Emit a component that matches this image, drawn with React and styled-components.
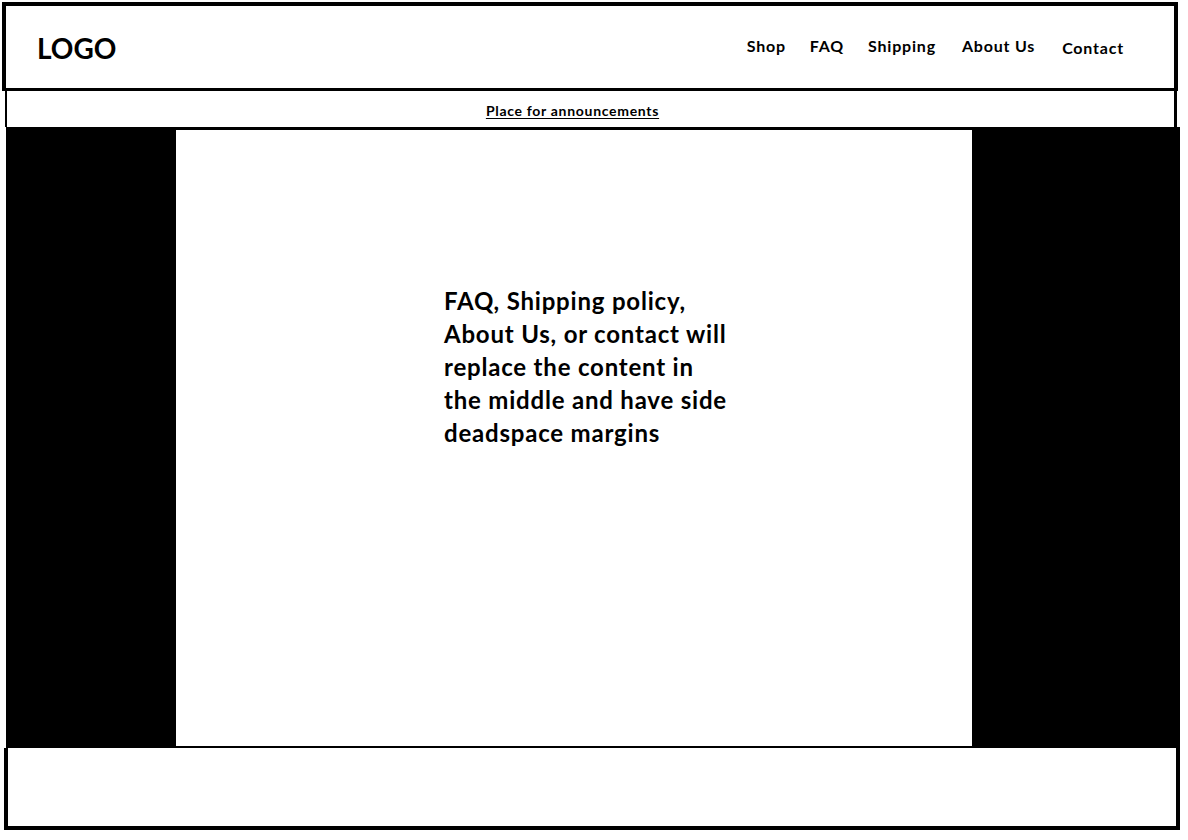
import styled, { createGlobalStyle } from "styled-components";

const GlobalStyle = createGlobalStyle`
  html, body {
    margin: 0;
    padding: 0;
    background: #fff;
  }
  body {
    font-family: Lato, "Open Sans", "Liberation Sans", sans-serif;
    color: #000;
  }
`;

const Frame = styled.div`
  width: 1178px;
  margin: 2px 0 0 2px;
  display: flex;
  flex-direction: column;
`;

const Header = styled.header`
  height: 82px;
  border: 4px solid #000;
  border-bottom-width: 3px;
  margin-right: 2px;
  display: flex;
  align-items: center;
  justify-content: space-between;
  padding: 0 50px 0 31px;
`;

const Logo = styled.div`
  font-size: 28px;
  font-weight: 700;
  margin-top: 2px;
`;

const Nav = styled.nav`
  display: flex;
  align-items: center;
  gap: 24px;
  margin-top: -3px;
`;

const NavLink = styled.a`
  font-size: 16px;
  font-weight: 700;
  letter-spacing: 0.8px;
  color: #000;
  text-decoration: none;
  margin-top: ${({ $drop }) => ($drop ? "4px" : "0")};
  margin-left: ${({ $gap }) => $gap || 0}px;
`;

const Announcement = styled.div`
  height: 36px;
  margin: 0 3px 0 3px;
  border-left: 2px solid #000;
  border-right: 3px solid #000;
  display: flex;
  align-items: center;
  justify-content: center;
  padding-right: 36px;
`;

const AnnouncementText = styled.a`
  font-size: 14px;
  font-weight: 700;
  letter-spacing: 0.7px;
  color: #000;
  text-decoration: underline;
  text-underline-offset: 2px;
  margin-top: 2px;
`;

const Band = styled.main`
  height: 621px;
  margin-left: 4px;
  background: #000;
  display: flex;
  justify-content: center;
  padding: 3px 0 2px;
  box-sizing: border-box;
`;

const Panel = styled.section`
  width: 796px;
  margin-left: -38px;
  background: #fff;
  box-sizing: border-box;
  padding: 154px 0 0 268px;
`;

const Message = styled.p`
  margin: 0;
  white-space: nowrap;
  font-size: 24px;
  font-weight: 700;
  letter-spacing: 0.8px;
  line-height: 33px;
`;

const Footer = styled.footer`
  height: 78px;
  margin-left: 2px;
  border: 4px solid #000;
  border-top: none;
`;

const navItems = [
  { label: "Shop" },
  { label: "FAQ" },
  { label: "Shipping" },
  { label: "About Us", gap: 2 },
  { label: "Contact", gap: 3, drop: true },
];

export default function App() {
  return (
    <>
      <GlobalStyle />
      <Frame>
        <Header>
          <Logo>LOGO</Logo>
          <Nav>
            {navItems.map((item) => (
              <NavLink key={item.label} href="#" $gap={item.gap} $drop={item.drop}>
                {item.label}
              </NavLink>
            ))}
          </Nav>
        </Header>
        <Announcement>
          <AnnouncementText href="#">Place for announcements</AnnouncementText>
        </Announcement>
        <Band>
          <Panel>
            <Message>
              FAQ, Shipping policy,
              <br />
              About Us, or contact will
              <br />
              replace the content in
              <br />
              the middle and have side
              <br />
              deadspace margins
            </Message>
          </Panel>
        </Band>
        <Footer />
      </Frame>
    </>
  );
}
